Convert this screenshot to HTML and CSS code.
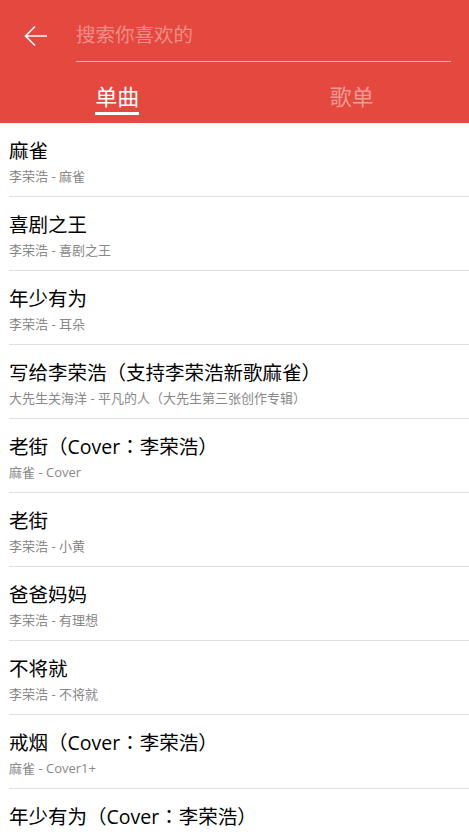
FILE: index.html
```html
<!DOCTYPE html>
<html lang="zh">
<head>
<meta charset="utf-8">
<link rel="stylesheet" href="styles.css">
</head>
<body>
<header class="top">
  <div class="search-row">
    <svg class="back" width="24" height="22" viewBox="0 0 24 22"><path d="M23 11H2M11 1.5L1.5 11L11 20.5" fill="none" stroke="#fff" stroke-width="1.6"/></svg>
    <div class="search-box"><span class="placeholder">搜索你喜欢的</span></div>
  </div>
  <nav class="tabs">
    <div class="tab active"><span>单曲</span></div>
    <div class="tab"><span>歌单</span></div>
  </nav>
</header>
<ul class="list" lang="zh-Hant">
  <li><div class="title">麻雀</div><div class="sub">李荣浩 - 麻雀</div></li>
  <li><div class="title">喜剧之王</div><div class="sub">李荣浩 - 喜剧之王</div></li>
  <li><div class="title">年少有为</div><div class="sub">李荣浩 - 耳朵</div></li>
  <li><div class="title">写给李荣浩（支持李荣浩新歌麻雀）</div><div class="sub">大先生关海洋 - 平凡的人（大先生第三张创作专辑）</div></li>
  <li><div class="title">老街（Cover：李荣浩）</div><div class="sub">麻雀 - Cover</div></li>
  <li><div class="title">老街</div><div class="sub">李荣浩 - 小黄</div></li>
  <li><div class="title">爸爸妈妈</div><div class="sub">李荣浩 - 有理想</div></li>
  <li><div class="title">不将就</div><div class="sub">李荣浩 - 不将就</div></li>
  <li><div class="title">戒烟（Cover：李荣浩）</div><div class="sub">麻雀 - Cover1+</div></li>
  <li><div class="title">年少有为（Cover：李荣浩）</div><div class="sub">李荣浩 - Cover</div></li>
</ul>
</body>
</html>
```
FILE: styles.css
```css
* { box-sizing: border-box; }
html, body { margin: 0; padding: 0; }
body {
  font-family: "Open Sans", "Noto Sans CJK TC", sans-serif;
  background: #fff;
  color: #000;
  overflow: hidden;
  height: 834px;
}
.top {
  background: #e5483f;
  height: 123px;
}
.search-row {
  display: flex;
  align-items: flex-start;
  padding: 0 18px 0 24px;
}
.back {
  margin-top: 25px;
  flex: none;
}
.search-box {
  margin-left: 28px;
  flex: 1;
  height: 62px;
  border-bottom: 1px solid rgba(255,255,255,0.6);
  display: flex;
  align-items: center;
  padding-top: 6px;
}
.placeholder {
  font-size: 19.5px;
  color: #f08d86;
  font-family: "Noto Sans CJK SC", sans-serif;
}
.tabs {
  display: flex;
  height: 61px;
}
.tab {
  flex: 1;
  display: flex;
  justify-content: center;
  align-items: center;
}
.tab span {
  font-family: "Noto Sans CJK SC", sans-serif;
  font-size: 22px;
  color: #f39a93;
  line-height: 30px;
  padding-bottom: 2px;
  border-bottom: 3px solid transparent;
  margin-top: 10px;
}
.tab.active span {
  color: #fff;
  border-bottom-color: #fff;
}
.list {
  list-style: none;
  margin: 0;
  padding: 0 0 0 9px;
}
.list li {
  height: 74px;
  border-bottom: 1px solid #e0e0e0;
  display: flex;
  flex-direction: column;
  justify-content: center;
  padding-top: 5px;
}
.title {
  font-size: 19.5px;
  line-height: 27px;
  color: #000;
}
.sub {
  font-size: 13px;
  line-height: 22px;
  margin-top: 1px;
  color: #888;
}
```
